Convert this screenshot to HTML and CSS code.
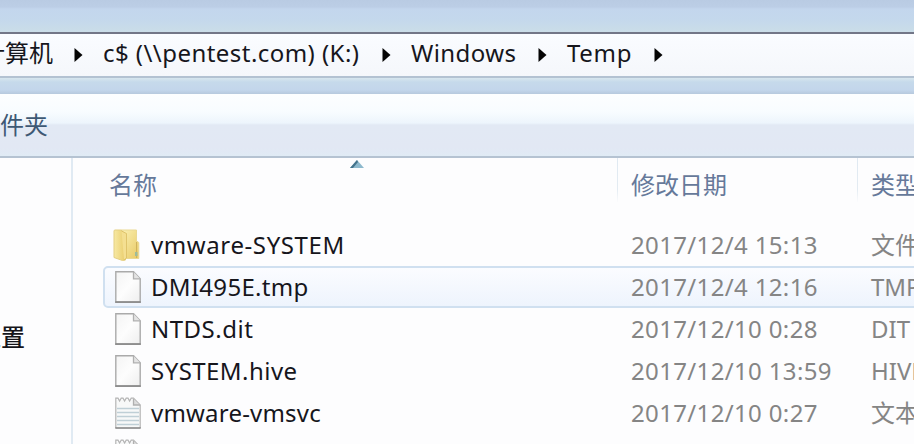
FILE: index.html
```
<!DOCTYPE html>
<html lang="zh-CN">
<head>
<meta charset="utf-8">
<title>Temp</title>
<link rel="stylesheet" href="styles.css">
</head>
<body>
<svg class="defs" width="0" height="0" aria-hidden="true">
  <defs>
    <linearGradient id="paper" x1="0" y1="0" x2="1" y2="1"><stop offset="0" stop-color="#f4f4f4"/><stop offset=".5" stop-color="#fdfdfd"/><stop offset="1" stop-color="#eeeeee"/></linearGradient>
    <linearGradient id="back" x1="0" y1="0" x2="1" y2="1"><stop offset="0" stop-color="#fbf1b4"/><stop offset="1" stop-color="#e8c964"/></linearGradient>
    <linearGradient id="front" x1="0" y1="0" x2="1" y2="0"><stop offset="0" stop-color="#f7e9a4"/><stop offset=".8" stop-color="#ecd276"/><stop offset="1" stop-color="#dcbb58"/></linearGradient>
    <symbol id="file" viewBox="0 0 26 32">
      <path d="M.8.8H18.5L25.2 7.8V31.2H.8Z" fill="url(#paper)" stroke="#aaaaaa" stroke-width="1.4"/>
      <path d="M18.5.8V7.8H25.2" fill="#e4e4e4" stroke="#b0b0b0" stroke-width="1.3"/>
      <path d="M.3 31H25.7" stroke="#888888" stroke-width="1.6"/>
    </symbol>
    <symbol id="text" viewBox="0 0 26 32">
      <path d="M.8 3H18.5L25.2 8V31.2H.8Z" fill="#f7f8f8"/>
      <path d="M.8 31V1.2H3L4.6 4 6.2 1.2H8L9.6 4 11.2 1.2H13L14.6 4 16.2 1.2H18.5L25.2 8V31" fill="none" stroke="#b4b4b4" stroke-width="1.2"/>
      <path d="M18.5 2V8H25.2" fill="#ddd" stroke="#b0b0b0" stroke-width="1.3"/>
      <path d="M2 11.5H24M2 15.5H24M2 19.5H24M2 23.5H24M2 27.5H24" stroke="#bfcfd6" stroke-width="1.3"/>
      <path d="M.3 31H25.7" stroke="#888888" stroke-width="1.6"/>
    </symbol>
    <symbol id="folder" viewBox="0 0 28 32">
      <path d="M8 1H23.5V12L25.8 13.5V29.5H8Z" fill="url(#back)" stroke="#ead993" stroke-width="1"/>
      <path d="M1 2Q1 1 2 1H8L12.5 5V31L9.5 31.5 1 28.5Z" fill="url(#front)" stroke="#e4cf82" stroke-width="1"/>
      <path d="M8.5 2L13.5 4.5V29L11 31" fill="#f4df91" stroke="#d9bd62" stroke-width=".8"/>
      <path d="M23.5 13V29" stroke="#cfb25c" stroke-width="1"/>
      <path d="M22 23H24.5V27H22Z" fill="#9dbb9c"/>
    </symbol>
    <symbol id="arrow" viewBox="0 0 9 14"><path d="M.5 0L8.5 7 .5 14Z" fill="#050505"/></symbol>
  </defs>
</svg>
<div class="window">
  <div class="glass"></div>
  <nav class="address">
    <span class="crumb c-root">计算机</span><svg class="sep"><use href="#arrow"/></svg>
    <span class="crumb c-drive">c$ (\\pentest.com) (K:)</span><svg class="sep"><use href="#arrow"/></svg>
    <span class="crumb c-win">Windows</span><svg class="sep"><use href="#arrow"/></svg>
    <span class="crumb c-temp">Temp</span><svg class="sep"><use href="#arrow"/></svg>
  </nav>
  <div class="band"></div>
  <div class="toolbar"><span class="tool">文件夹</span></div>
  <main class="content">
    <aside class="side"><span class="place">位置</span></aside>
    <section class="list">
      <div class="head">
        <div class="h-name">名称<svg class="sort" viewBox="0 0 14 8"><path d="M7 0L14 8H0Z" fill="#8db9cd"/><path d="M7 0L0 8H3L8 2Z" fill="#44738b"/></svg></div>
        <div class="h-date">修改日期</div>
        <div class="h-type">类型</div>
      </div>
      <div class="row"><svg class="icon folder"><use href="#folder"/></svg><span class="name n1">vmware-SYSTEM</span><span class="date">2017/12/4 15:13</span><span class="type">文件夹</span></div>
      <div class="row hover"><svg class="icon"><use href="#file"/></svg><span class="name n2">DMI495E.tmp</span><span class="date">2017/12/4 12:16</span><span class="type">TMP 文件</span></div>
      <div class="row"><svg class="icon"><use href="#file"/></svg><span class="name n3">NTDS.dit</span><span class="date">2017/12/10 0:28</span><span class="type">DIT 文件</span></div>
      <div class="row"><svg class="icon"><use href="#file"/></svg><span class="name n4">SYSTEM.hive</span><span class="date">2017/12/10 13:59</span><span class="type">HIVE 文件</span></div>
      <div class="row"><svg class="icon"><use href="#text"/></svg><span class="name n5">vmware-vmsvc</span><span class="date">2017/12/10 0:27</span><span class="type">文本文档</span></div>
      <div class="row"><svg class="icon"><use href="#text"/></svg></div>
    </section>
  </main>
</div>
</body>
</html>
```
FILE: styles.css
```
* { box-sizing: border-box; }
body {
  margin: 0;
  font-family: "Noto Sans", "Noto Sans CJK SC", sans-serif;
  font-size: 24px;
  line-height: 42px;
  color: #16161c;
  overflow: hidden;
}
.defs { display: block; }
.window {
  width: 914px;
  height: 444px;
  display: flex;
  flex-direction: column;
  overflow: hidden;
  white-space: nowrap;
  background: #fdfdfe;
}
.glass {
  height: 32px;
  flex: none;
  background: linear-gradient(#b9cbe3 0, #bccee6 7px, #c3d6ed 9px, #c4d8ec 20px, #cadde8 31px);
}
.address {
  height: 46px;
  flex: none;
  display: flex;
  align-items: center;
  border-top: 2px solid #727687;
  border-bottom: 2px solid #b3c2d2;
  background: linear-gradient(#fafcff, #f5f7fb);
}
.crumb { flex: none; line-height: 40px; margin-top: -4px; }
.c-root { width: 72px; margin-left: -19px; }
.c-drive { width: 257px; letter-spacing: .45px; }
.c-win { width: 106px; letter-spacing: .4px; }
.c-temp { width: 66px; letter-spacing: .7px; }
.sep { width: 9px; height: 14px; flex: none; margin: 0 20px 0 21px; }
.c-drive + .sep { margin-left: 22px; }
.band {
  height: 16px;
  flex: none;
  background: linear-gradient(#d7e6ee, #c6daeb 4px, #c3d6eb 12px, #b7c9dd);
}
.toolbar {
  height: 64px;
  flex: none;
  border-bottom: 2px solid #b5c3d2;
  background: linear-gradient(#fdfeff 0, #f8fcff 18px, #edf5fc 29px, #e2e9f4 31px, #e2e8f4 54px, #e0ebf5 62px);
}
.tool { display: block; margin-left: -24px; line-height: 62px; color: #3d5874; }
.content { flex: 1; min-height: 0; display: flex; }
.side { width: 73px; flex: none; border-right: 2px solid #e0eaf3; padding-top: 158px; }
.place { display: block; margin-left: -23px; color: #15151a; font-weight: 500; }
.list { width: 841px; flex: none; padding-left: 30px; }
.head { height: 66px; display: flex; line-height: 53px; color: #66799a; }
.h-name { width: 514px; flex: none; padding-left: 6px; position: relative; }
.sort { position: absolute; left: 247px; top: 2px; width: 14px; height: 8px; }
.h-date, .h-type {
  width: 240px;
  flex: none;
  height: 44px;
  padding-left: 13px;
  border-left: 1px solid;
  border-image: linear-gradient(#dfe9f2, #e3ebf2 70%, #fdfdfe) 1;
}
.row {
  width: 841px;
  height: 42px;
  display: flex;
  align-items: center;
  border: 2px solid transparent;
  padding-left: 10px;
}
.hover {
  border-color: #d0e0f0;
  border-radius: 5px;
  background: linear-gradient(#fbfcff, #eef4fd);
}
.icon { width: 26px; height: 32px; flex: none; margin: 0 10px 0 0; }
.folder { width: 28px; margin: 0 10px 0 -2px; }
.name { width: 480px; flex: none; line-height: 38px; }
.n1 { letter-spacing: .6px; }
.n2 { letter-spacing: .3px; }
.n3 { letter-spacing: .5px; }
.n4 { letter-spacing: .45px; }
.n5 { letter-spacing: .2px; }
.date { width: 240px; flex: none; line-height: 38px; color: #858585; letter-spacing: .35px; }
.type { line-height: 38px; color: #858585; }
```
